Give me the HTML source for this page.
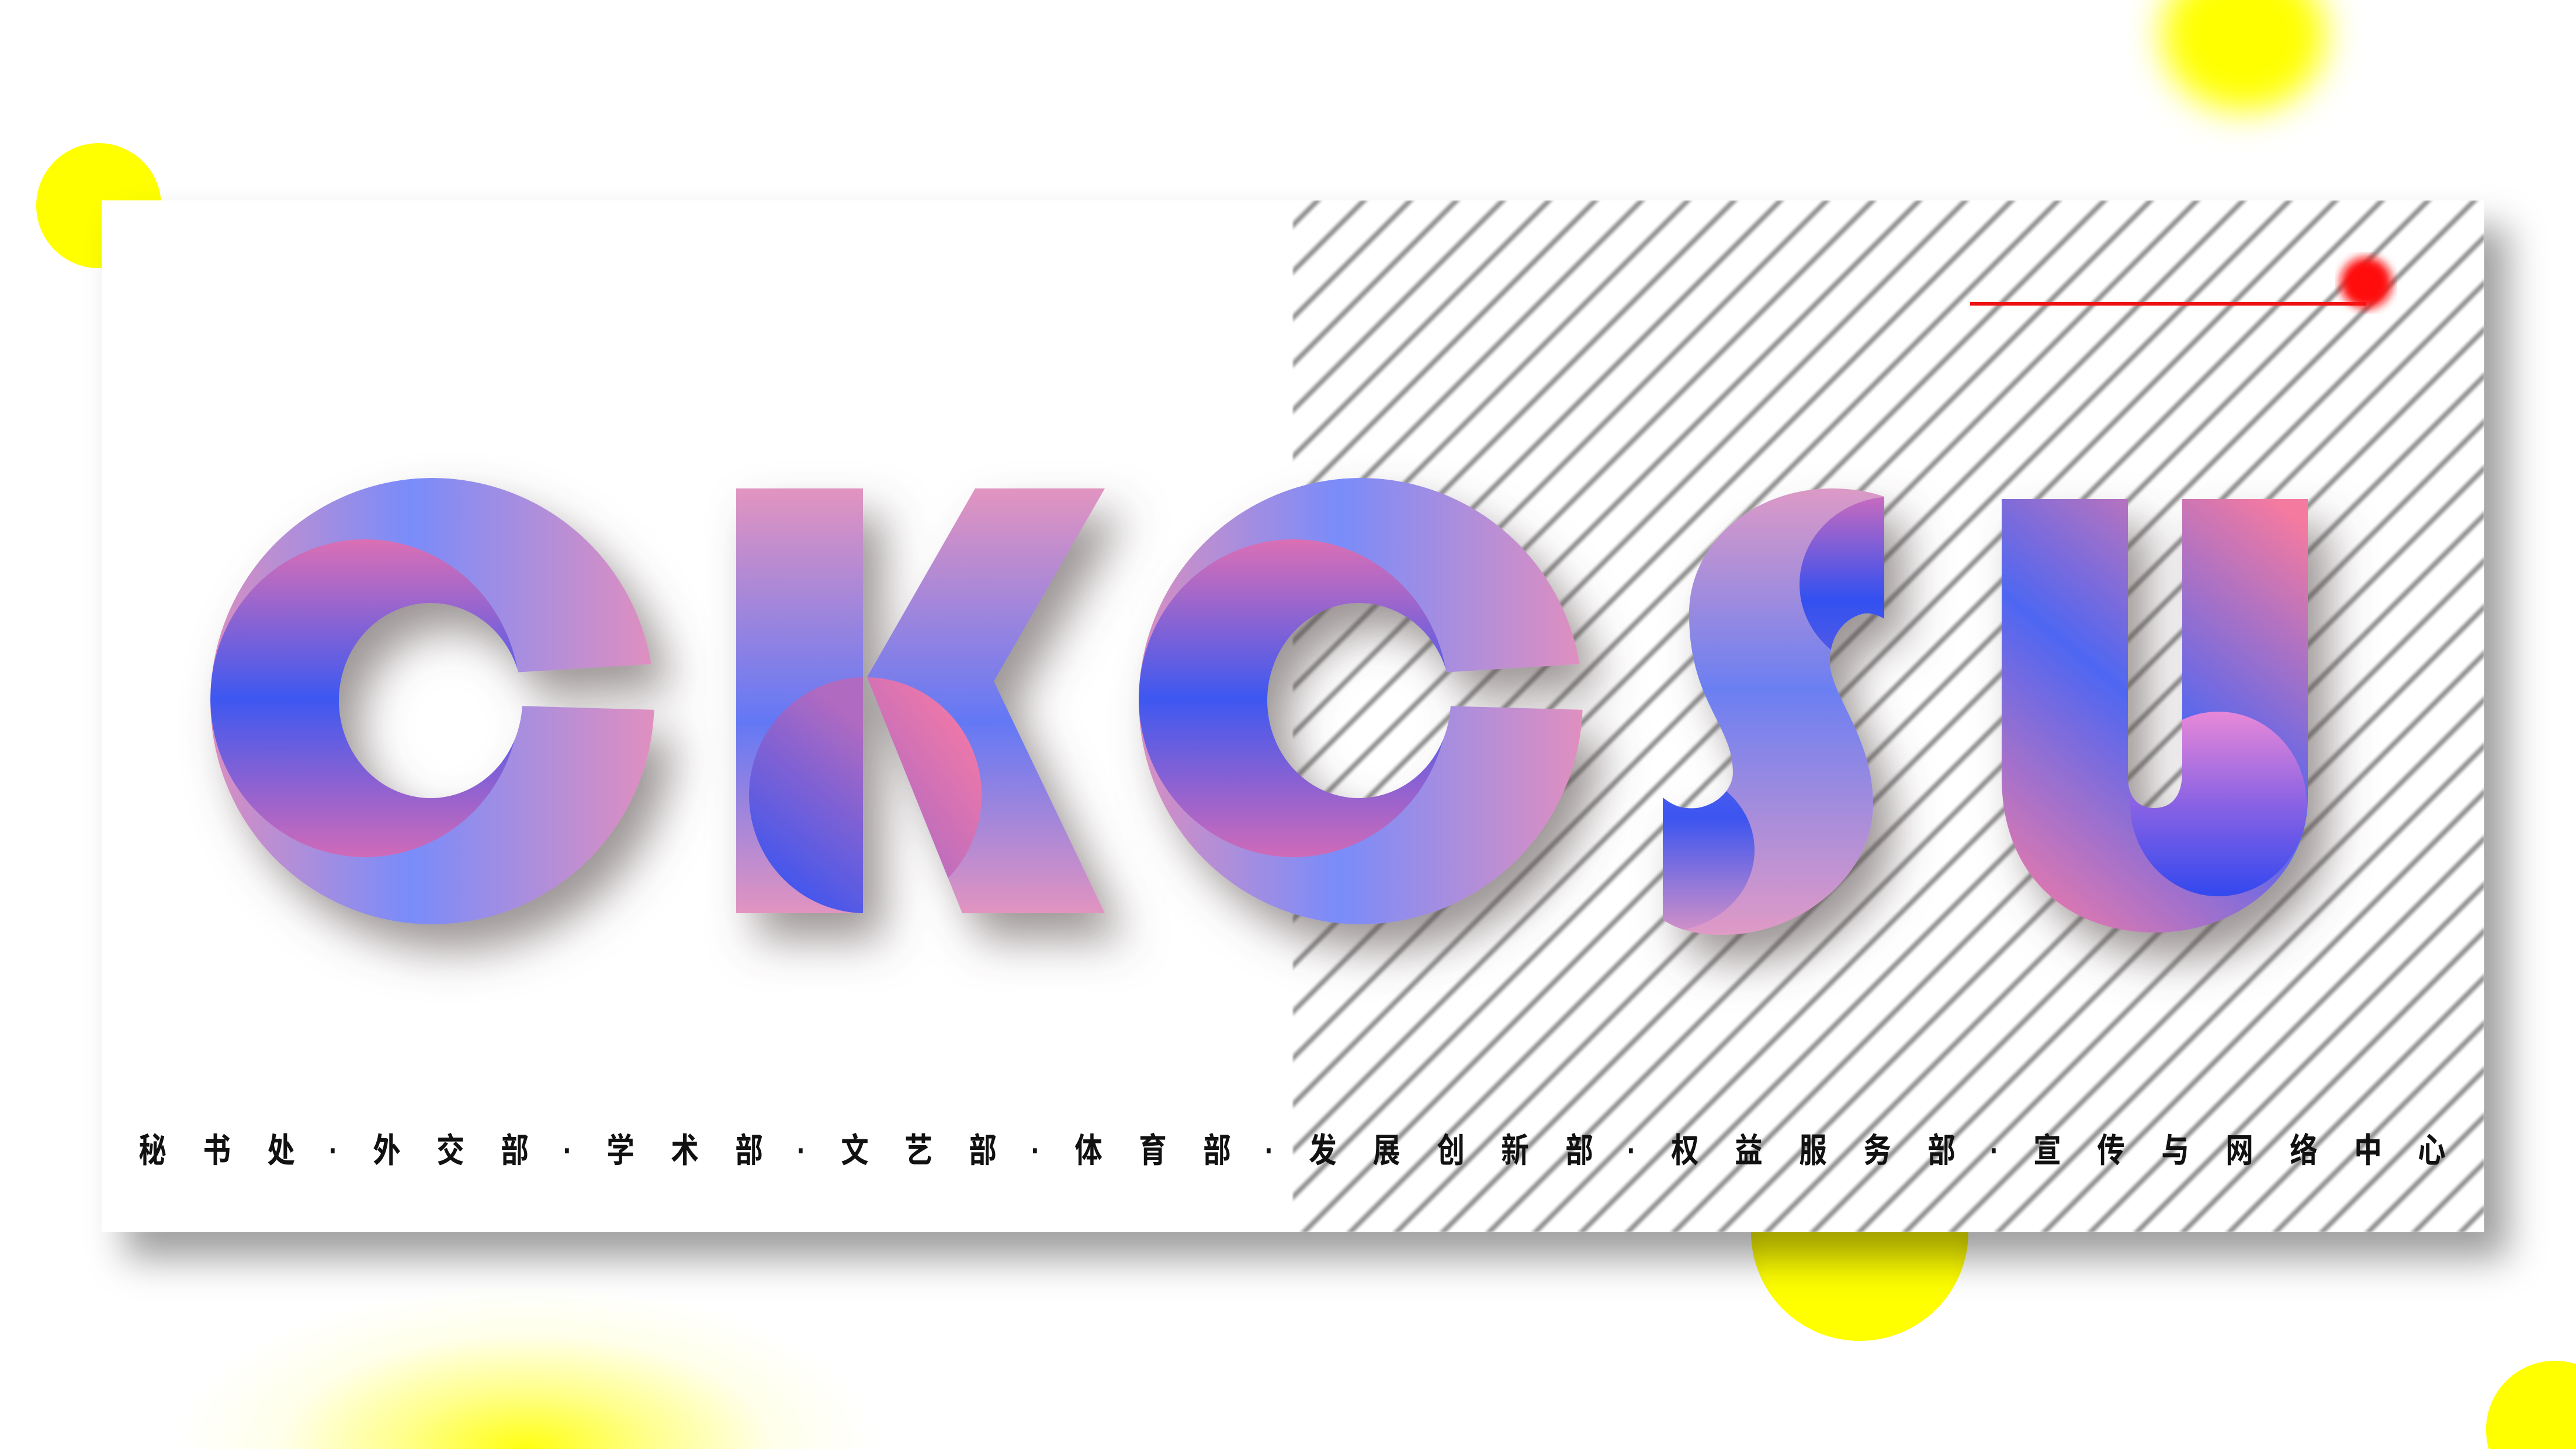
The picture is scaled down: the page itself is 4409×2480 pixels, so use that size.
<!DOCTYPE html>
<html><head><meta charset="utf-8"><style>
html,body{margin:0;padding:0;background:#fff;overflow:hidden;width:4409px;height:2480px;}
body{position:relative;}
.y{position:absolute;border-radius:50%;background:#ffff00;}
#card{position:absolute;left:174px;top:343px;width:4078px;height:1766px;background:#fff;box-shadow:40px 45px 60px rgba(0,0,0,.38);overflow:hidden;}
#stripes{position:absolute;left:2039px;top:0;width:2039px;height:1766px;
background:repeating-linear-gradient(135deg,#fff 0,#fff 23px,#c0c0c0 26px,#858585 30px,#c0c0c0 34px,#fff 37px,#fff 56px);filter:blur(1.5px);}
#txt{position:absolute;left:232px;width:3960px;top:1930px;height:80px;display:flex;justify-content:space-between;
font-family:"Liberation Sans","Noto Sans CJK SC",sans-serif;font-weight:bold;font-size:58px;color:#111;line-height:80px;}
#txt span{display:inline-block;transform:scaleX(.82);}
</style></head><body>
<div class="y" style="left:62px;top:245px;width:214px;height:214px;"></div>
<div class="y" style="left:3700px;top:-70px;width:280px;height:260px;filter:blur(30px);"></div>
<div class="y" style="left:2997px;top:1923px;width:372px;height:372px;background:radial-gradient(circle at 50% 60%,#ffff00 55%,#e0da00 100%);"></div>
<div class="y" style="left:4255px;top:2329px;width:236px;height:236px;"></div>
<div style="position:absolute;left:300px;top:2200px;width:1200px;height:280px;background:radial-gradient(ellipse 50% 100% at 50% 100%,#ffff10 0%,rgba(255,255,60,.6) 35%,rgba(255,255,150,.2) 70%,rgba(255,255,255,0) 100%);"></div>
<div id="card"><div id="stripes"></div></div>
<svg style="position:absolute;left:0;top:0" width="4409" height="2480" viewBox="0 0 4409 2480">
<defs>
<filter id="sh" x="-30%" y="-30%" width="160%" height="160%"><feDropShadow dx="35" dy="45" stdDeviation="38" flood-color="#5a5050" flood-opacity=".6"/></filter>
<filter id="rb"><feGaussianBlur stdDeviation="8"/></filter>
<linearGradient id="cOut" x1="360" y1="0" x2="1119" y2="0" gradientUnits="userSpaceOnUse">
<stop offset="0" stop-color="#d98fc0"/><stop offset=".45" stop-color="#798cfa"/><stop offset="1" stop-color="#e08fbf"/></linearGradient>
<linearGradient id="cIn" x1="0" y1="924" x2="0" y2="1467" gradientUnits="userSpaceOnUse">
<stop offset="0" stop-color="#da6fb5"/><stop offset=".5" stop-color="#3d58f0"/><stop offset="1" stop-color="#d06ab8"/></linearGradient>
<mask id="cm" maskUnits="userSpaceOnUse" x="0" y="0" width="4409" height="2480">
<ellipse cx="740" cy="1200" rx="380" ry="382" fill="#fff"/>
<ellipse cx="737" cy="1199" rx="157" ry="167" fill="#000"/>
<polygon points="880,1151 1125,1136 1125,1215 880,1208" fill="#000"/>
</mask>
<linearGradient id="kv" x1="0" y1="836" x2="0" y2="1563" gradientUnits="userSpaceOnUse">
<stop offset="0" stop-color="#e294c0"/><stop offset=".55" stop-color="#6378f5"/><stop offset="1" stop-color="#e294c0"/></linearGradient>
<linearGradient id="kl" x1="1282" y1="1500" x2="1484" y2="1250" gradientUnits="userSpaceOnUse">
<stop offset="0" stop-color="#3a55f0"/><stop offset="1" stop-color="#b06ac0"/></linearGradient>
<linearGradient id="kr" x1="1484" y1="1450" x2="1700" y2="1300" gradientUnits="userSpaceOnUse">
<stop offset="0" stop-color="#a868c8"/><stop offset="1" stop-color="#f078a8"/></linearGradient>
<clipPath id="kstem"><rect x="1260" y="836" width="217" height="727"/></clipPath>
<clipPath id="kleg"><polygon points="1484,1159 1701,1166 1891,1563 1647,1563"/></clipPath>
<linearGradient id="sg" x1="0" y1="836" x2="0" y2="1600" gradientUnits="userSpaceOnUse">
<stop offset="0" stop-color="#dc9ac6"/><stop offset=".45" stop-color="#6b7ff2"/><stop offset="1" stop-color="#e09ac6"/></linearGradient>
<linearGradient id="sd1" x1="0" y1="853" x2="0" y2="1100" gradientUnits="userSpaceOnUse">
<stop offset="0" stop-color="#c46ac0"/><stop offset=".7" stop-color="#3250f0"/><stop offset="1" stop-color="#4a58e8"/></linearGradient>
<linearGradient id="sd2" x1="0" y1="1317" x2="0" y2="1593" gradientUnits="userSpaceOnUse">
<stop offset="0" stop-color="#5060ee"/><stop offset=".3" stop-color="#3c55f0"/><stop offset="1" stop-color="#d090c8"/></linearGradient>
<clipPath id="sc"><path d="M3136,836 C3175,836 3205,843 3225,850 L3225,1059 C3210,1050 3195,1048 3186,1051 C3150,1062 3132,1095 3132,1132 C3132,1190 3206,1260 3206,1376 C3206,1500 3080,1600 2949,1600 C2900,1600 2870,1590 2846,1574 L2846,1365 C2865,1380 2880,1385 2904,1383 C2940,1378 2966,1350 2966,1322 C2966,1240 2891,1200 2891,1051 C2891,930 3000,836 3136,836 Z"/></clipPath>
<linearGradient id="ug" x1="3426" y1="1550" x2="3950" y2="900" gradientUnits="userSpaceOnUse">
<stop offset="0" stop-color="#f07aa8"/><stop offset=".5" stop-color="#4e66f2"/><stop offset="1" stop-color="#f57aa0"/></linearGradient>
<linearGradient id="ui" x1="0" y1="1218" x2="0" y2="1534" gradientUnits="userSpaceOnUse">
<stop offset="0" stop-color="#e888d8"/><stop offset=".5" stop-color="#8a62e4"/><stop offset="1" stop-color="#3248ee"/></linearGradient>
<clipPath id="uc"><path d="M3426,854 L3642,854 L3642,1330 C3642,1365 3660,1383 3687,1383 C3715,1383 3735,1365 3735,1322 L3735,854 L3950,854 L3950,1365 C3950,1500 3830,1596 3690,1596 C3540,1596 3426,1500 3426,1330 Z"/></clipPath>
<g id="C">
<g mask="url(#cm)">
<ellipse cx="740" cy="1200" rx="380" ry="382" fill="url(#cOut)"/>
<ellipse cx="625" cy="1195" rx="265" ry="272" fill="url(#cIn)"/>
</g></g>
</defs>
<g filter="url(#sh)"><use href="#C"/></g>
<g filter="url(#sh)">
<rect x="1260" y="836" width="217" height="727" fill="url(#kv)"/>
<polygon points="1669,836 1891,836 1701,1166 1891,1563 1647,1563 1484,1159" fill="url(#kv)"/>
<ellipse cx="1481" cy="1361" rx="199" ry="202" fill="url(#kl)" clip-path="url(#kstem)"/>
<ellipse cx="1481" cy="1361" rx="199" ry="202" fill="url(#kr)" clip-path="url(#kleg)"/>
</g>
<g filter="url(#sh)" transform="translate(1589,0)"><use href="#C"/></g>
<g filter="url(#sh)">
<g clip-path="url(#sc)">
<rect x="2840" y="830" width="400" height="780" fill="url(#sg)"/>
<ellipse cx="3240" cy="1000" rx="160" ry="150" fill="url(#sd1)"/>
<ellipse cx="2846" cy="1455" rx="157" ry="140" fill="url(#sd2)"/>
</g></g>
<g filter="url(#sh)">
<g clip-path="url(#uc)">
<rect x="3420" y="850" width="540" height="760" fill="url(#ug)"/>
<ellipse cx="3797" cy="1376" rx="151" ry="158" fill="url(#ui)"/>
</g></g>
<line x1="3372" y1="520" x2="4050" y2="520" stroke="#ee1111" stroke-width="6"/>
<circle cx="4050" cy="484" r="44" fill="#ff1010" filter="url(#rb)"/>
</svg>
<div id="txt"><span>秘</span><span>书</span><span>处</span><span>·</span><span>外</span><span>交</span><span>部</span><span>·</span><span>学</span><span>术</span><span>部</span><span>·</span><span>文</span><span>艺</span><span>部</span><span>·</span><span>体</span><span>育</span><span>部</span><span>·</span><span>发</span><span>展</span><span>创</span><span>新</span><span>部</span><span>·</span><span>权</span><span>益</span><span>服</span><span>务</span><span>部</span><span>·</span><span>宣</span><span>传</span><span>与</span><span>网</span><span>络</span><span>中</span><span>心</span></div>
</body></html>
